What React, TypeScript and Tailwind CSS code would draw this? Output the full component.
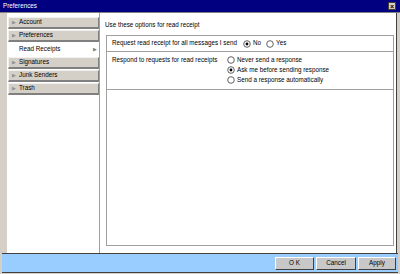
import React from "react";

const font = { fontFamily: '"Liberation Sans", Arial, sans-serif' };

function Tab({ label, selected }: { label: string; selected?: boolean }) {
  if (selected) {
    return (
      <div className="h-[13px] flex items-center bg-white text-[6.3px] text-black pl-[11px] pr-[2px] whitespace-nowrap">
        <span className="flex-1 leading-none">{label}</span>
        <span className="text-[5px] text-[#808080] leading-none">▶</span>
      </div>
    );
  }
  return (
    <div className="h-[12px] mb-[1px] flex items-center bg-[#d4d0c8] border-t border-l border-t-[#f0f0f0] border-l-[#f0f0f0] border-r border-r-[#808080] border-b-2 border-b-[#808080] text-[6.3px] text-black whitespace-nowrap">
      <span className="text-[5px] text-[#909090] leading-none w-[10px] pl-[3px]">▶</span>
      <span className="leading-none">{label}</span>
    </div>
  );
}

function Radio({ checked, label }: { checked?: boolean; label: string }) {
  return (
    <div className="flex items-center gap-[2px] h-[10px] whitespace-nowrap">
      <svg width="8" height="8" viewBox="0 0 8 8">
        <circle cx="4" cy="4" r="3.3" fill="white" stroke="#505050" strokeWidth="0.9" />
        {checked && <circle cx="4" cy="4" r="1.4" fill="black" />}
      </svg>
      <span className="text-[6.3px] leading-none text-black">{label}</span>
    </div>
  );
}

export default function App() {
  return (
    <div style={font} className="w-[400px] h-[274px] bg-[#d4d0c8] flex flex-col overflow-hidden">
      <div className="h-[13px] bg-[#000080] flex items-center px-[3px] border-b border-[#808080]">
        <span className="text-white text-[6.3px] leading-none flex-1">Preferences</span>
        <div className="w-[8px] h-[8px] bg-[#d4d0c8] border border-[#404040] flex items-center justify-center text-[7px] leading-none text-black font-bold mr-[1px]">
          ×
        </div>
      </div>
      <div className="flex-1 flex pr-[3px] min-h-0">
        <div className="w-[100px] flex">
          <div className="w-[7px] bg-[#d4d0c8]" />
          <div className="flex-1 bg-white border-r border-[#a0a0a0] pt-[4px] pl-[1px]">
            <Tab label="Account" />
            <Tab label="Preferences" />
            <Tab label="Read Receipts" selected />
            <div className="h-[1px]" />
            <Tab label="Signatures" />
            <Tab label="Junk Senders" />
            <Tab label="Trash" />
          </div>
        </div>
        <div className="flex-1 bg-white flex flex-col pl-[5px] pr-[2px] pt-[7px] pb-[7px] border-r border-[#404040]">
          <div className="text-[6.3px] leading-none text-black h-[10px] flex items-center whitespace-nowrap">Use these options for read receipt</div>
          <div className="mt-[5px] ml-[1px] flex-1 border border-[#a0a0a0] flex flex-col">
            <div className="h-[16px] flex items-center border-b border-[#a0a0a0] pl-[5px]">
              <span className="text-[6.3px] leading-none text-black w-[131px] whitespace-nowrap">Request read receipt for all messages I send</span>
              <div className="flex gap-[5px]">
                <Radio checked label="No" />
                <Radio label="Yes" />
              </div>
            </div>
            <div className="h-[38px] flex border-b border-[#a0a0a0] pl-[5px] pt-[3px]">
              <span className="text-[6.3px] leading-none text-black w-[115px] pt-[2px] whitespace-nowrap">Respond to requests for read receipts</span>
              <div className="flex flex-col">
                <Radio label="Never send a response" />
                <Radio checked label="Ask me before sending response" />
                <Radio label="Send a response automatically" />
              </div>
            </div>
          </div>
        </div>
      </div>
      <div className="h-[20px] border-t border-[#404040] border-b border-b-[#404040] bg-[#99ccff] mx-[2px] mb-[1px] flex items-center justify-end gap-[2px] pr-[2px]">
        <div className="w-[39px] h-[13px] bg-[#c8c8c8] border border-t-white border-l-white border-r-[#404040] border-b-[#404040] flex items-center justify-center text-[6.3px] leading-none text-black">O K</div>
        <div className="w-[40px] h-[13px] bg-[#c8c8c8] border border-t-white border-l-white border-r-[#404040] border-b-[#404040] flex items-center justify-center text-[6.3px] leading-none text-black">Cancel</div>
        <div className="w-[38px] h-[13px] bg-[#c8c8c8] border border-t-white border-l-white border-r-[#404040] border-b-[#404040] flex items-center justify-center text-[6.3px] leading-none text-black">Apply</div>
      </div>
    </div>
  );
}
